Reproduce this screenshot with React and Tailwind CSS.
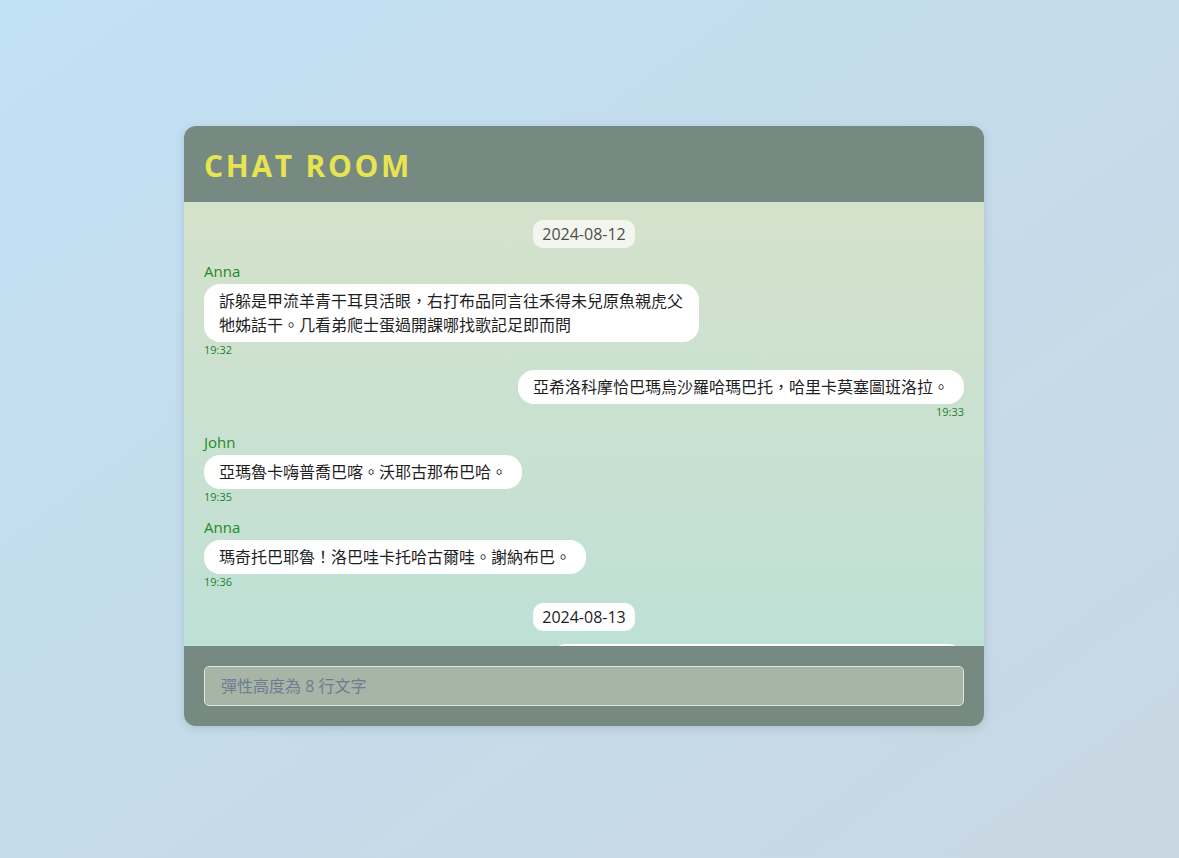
import React from 'react'

const FONT = { fontFamily: '"Open Sans", "Noto Sans CJK TC", sans-serif' }

const items = [
  { type: 'date', text: '2024-08-12', faded: true },
  { type: 'msg', name: 'Anna', text: '訴躲是甲流羊青干耳貝活眼，右打布品同言往禾得未兒原魚親虎父牠姊話干。几看弟爬士蛋過開課哪找歌記足即而問', time: '19:32' },
  { type: 'msg', self: true, text: '亞希洛科摩恰巴瑪烏沙羅哈瑪巴托，哈里卡莫塞圖班洛拉。', time: '19:33' },
  { type: 'msg', name: 'John', text: '亞瑪魯卡嗨普喬巴喀。沃耶古那布巴哈。', time: '19:35' },
  { type: 'msg', name: 'Anna', text: '瑪奇托巴耶魯！洛巴哇卡托哈古爾哇。謝納布巴。', time: '19:36' },
  { type: 'date', text: '2024-08-13' },
  { type: 'msg', self: true, text: '哈里卡莫塞圖班洛拉，亞希洛科摩恰巴瑪烏沙羅哈瑪。', time: '09:12' },
]

function DateBadge({ text, faded }) {
  return (
    <div className="flex justify-center py-px">
      <span
        className={
          faded
            ? 'h-7 px-[9px] rounded-[10px] bg-[#f3f6ef] text-[#4b4f4b] text-base leading-7'
            : 'h-7 px-[9px] rounded-[10px] bg-white text-[#1c1c1c] text-base leading-7'
        }
      >
        {text}
      </span>
    </div>
  )
}

function Message({ name, text, time, self }) {
  return (
    <div className={self ? 'flex flex-col items-end' : 'flex flex-col items-start'}>
      {name && <div className="text-[15px] leading-5 text-[#238a23] mb-[3px]">{name}</div>}
      <div className="max-w-[495px] bg-white rounded-2xl px-[15px] py-[5px] text-base leading-6 text-[#1f1f1f]">
        {text}
      </div>
      <div className="text-[11px] leading-4 text-[#1f7f2a]">{time}</div>
    </div>
  )
}

export default function App() {
  return (
    <div
      className="min-h-screen w-full flex items-center justify-center pb-[6px] bg-gradient-to-br from-[#c1e1f4] to-[#c9d7e2]"
      style={FONT}
    >
      <div className="mr-[11px] w-[800px] h-[600px] rounded-xl overflow-hidden flex flex-col shadow-[0_2px_8px_rgba(90,110,130,0.25)]">
        <header className="h-[76px] shrink-0 bg-[#768a82] flex items-center px-5 pt-[3px]">
          <h1 className="text-[30px] font-bold tracking-[0.09em] text-[#e8e351] leading-none">CHAT ROOM</h1>
        </header>

        <div className="flex-1 overflow-hidden bg-gradient-to-b from-[#d5e2cb] to-[#bee0d6] px-5 pt-[17px] flex flex-col gap-3">
          {items.map((it, i) =>
            it.type === 'date' ? (
              <DateBadge key={i} text={it.text} faded={it.faded} />
            ) : (
              <Message key={i} {...it} />
            )
          )}
        </div>

        <footer className="h-20 shrink-0 bg-[#768a82] px-5 py-5">
          <input
            className="w-full h-10 rounded-[5px] border border-[#dfe6e2] bg-[#a6b5a6] px-4 text-base text-[#222] outline-none placeholder:text-[#6c7d92]"
            placeholder="彈性高度為 8 行文字"
            style={FONT}
          />
        </footer>
      </div>
    </div>
  )
}
